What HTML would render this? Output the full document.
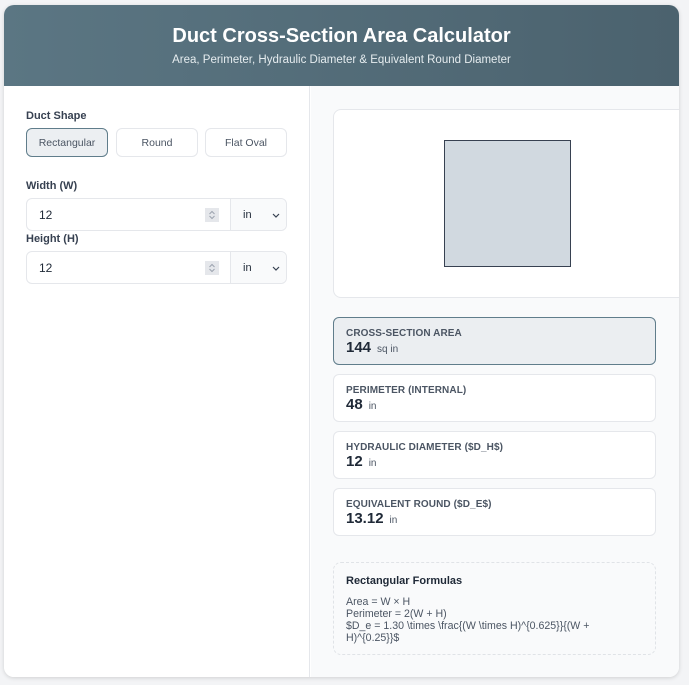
<!DOCTYPE html>
<html><head><style>
*{box-sizing:border-box;margin:0;padding:0}
body{width:689px;height:685px;background:#f3f4f6;font-family:"Liberation Sans",sans-serif;position:relative;overflow:hidden;color:#1f2937}
.card{position:absolute;left:4px;top:5px;width:675px;height:672px;background:#fff;border-radius:10px;box-shadow:0 1px 4px rgba(0,0,0,.15);overflow:hidden}
.hdr{height:81px;background:linear-gradient(90deg,#5b7683,#4b626e);color:#fff;text-align:center}
.hdr h1{font-size:20px;font-weight:bold;padding-top:20px;line-height:22px}
.hdr p{font-size:11.5px;margin-top:7px;color:#e5ecef}
.left{position:absolute;left:0;top:81px;width:306px;bottom:0;background:#fff;border-right:1px solid #e5e7eb}
.right{position:absolute;left:307px;top:81px;right:0;bottom:0;background:#f9fafb}
.lbl{position:absolute;left:22px;font-size:11px;font-weight:bold;color:#374151}
.btn{position:absolute;top:42px;height:29px;border:1px solid #e5e7eb;border-radius:6px;background:#fff;font-size:10.5px;color:#4b5563;text-align:center;line-height:28px}
.btn.a{background:#eceff2;border-color:#607d8b}
.inp{position:absolute;left:22px;width:261px;height:33px;border:1px solid #e5e7eb;border-radius:6px;background:#fff}
.inp .v{position:absolute;left:12px;top:9px;font-size:12px;color:#1f2937}
.inp .sp{position:absolute;left:178px;top:9px;width:14px;height:14px;background:#e5e7eb}
.inp .sp svg{display:block}
.inp .u{position:absolute;left:203px;top:0;right:0;bottom:0;background:#f9fafb;border-left:1px solid #e5e7eb;border-radius:0 6px 6px 0;font-size:11px;padding:10px 0 0 12px}
.inp .u svg{position:absolute;right:6px;top:14px}
.vis{position:absolute;left:22px;top:23px;width:360px;height:189px;background:#fff;border:1px solid #e5e7eb;border-radius:8px}
.rect{position:absolute;left:110px;top:30px;width:127px;height:127px;background:#d1d9e0;border:1.5px solid #374151}
.res{position:absolute;left:22px;width:323px;height:48px;background:#fff;border:1px solid #e5e7eb;border-radius:6px;padding:10px 0 0 12px}
.res.a{background:#ebeef1;border-color:#607d8b}
.res .t{font-size:10px;font-weight:bold;color:#4b5563;letter-spacing:.1px}
.res .n{font-size:15px;font-weight:bold;color:#1f2937;margin-top:0}
.res .n span{font-size:10px;font-weight:normal;color:#4b5563;margin-left:6px}
.form{position:absolute;left:22px;top:476px;width:323px;height:93px;border:1px dashed #e0e3e7;border-radius:8px;padding:12px 12px;font-size:10.6px;color:#4b5563;line-height:12px}
.form h4{font-size:11px;color:#1f2937;margin-bottom:9px}
</style></head><body>
<div class="card">
<div class="hdr"><h1>Duct Cross-Section Area Calculator</h1><p>Area, Perimeter, Hydraulic Diameter &amp; Equivalent Round Diameter</p></div>
<div class="left">
<div class="lbl" style="top:24px">Duct Shape</div>
<div class="btn a" style="left:22px;width:82px">Rectangular</div>
<div class="btn" style="left:112px;width:82px">Round</div>
<div class="btn" style="left:201px;width:82px">Flat Oval</div>
<div class="lbl" style="top:94px">Width (W)</div>
<div class="inp" style="top:112px"><span class="v">12</span><span class="sp"><svg width="14" height="14"><path d="M4.5 6L7 3.5 9.5 6M4.5 8L7 10.5 9.5 8" fill="none" stroke="#9ca3af" stroke-width="1"/></svg></span><div class="u">in<svg width="8" height="5"><path d="M1 1l3 3 3-3" fill="none" stroke="#374151" stroke-width="1.2"/></svg></div></div>
<div class="lbl" style="top:147px">Height (H)</div>
<div class="inp" style="top:165px"><span class="v">12</span><span class="sp"><svg width="14" height="14"><path d="M4.5 6L7 3.5 9.5 6M4.5 8L7 10.5 9.5 8" fill="none" stroke="#9ca3af" stroke-width="1"/></svg></span><div class="u">in<svg width="8" height="5"><path d="M1 1l3 3 3-3" fill="none" stroke="#374151" stroke-width="1.2"/></svg></div></div>
</div>
<div class="right">
<div class="vis"><div class="rect"></div></div>
<div class="res a" style="top:231px"><div class="t">CROSS-SECTION AREA</div><div class="n">144<span>sq in</span></div></div>
<div class="res" style="top:288px"><div class="t">PERIMETER (INTERNAL)</div><div class="n">48<span>in</span></div></div>
<div class="res" style="top:345px"><div class="t">HYDRAULIC DIAMETER ($D_H$)</div><div class="n">12<span>in</span></div></div>
<div class="res" style="top:402px"><div class="t">EQUIVALENT ROUND ($D_E$)</div><div class="n">13.12<span>in</span></div></div>
<div class="form"><h4>Rectangular Formulas</h4>Area = W × H<br>Perimeter = 2(W + H)<br>$D_e = 1.30 \times \frac{(W \times H)^{0.625}}{(W +<br>H)^{0.25}}$</div>
</div>
</div>
</body></html>
